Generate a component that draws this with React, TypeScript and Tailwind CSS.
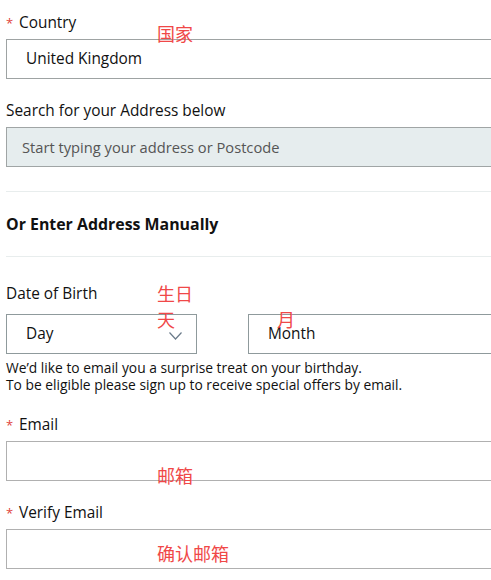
import React from "react";

const Label = ({ text, required }: { text: string; required?: boolean }) => (
  <div className="flex items-center h-[18px] text-[15.4px] leading-[18px] text-[#111]">
    {required && <span className="text-[#e0443c] text-[13px] w-[13px]">*</span>}
    <span>{text}</span>
  </div>
);

const App = () => {
  return (
    <div
      className="relative w-[491px] h-[580px] overflow-hidden bg-white pl-[6px]"
      style={{ fontFamily: "'Open Sans', 'Noto Sans CJK SC', sans-serif" }}
    >
      <div className="w-[520px] pt-[14px]">
        <Label text="Country" required />
        <div className="mt-[7px] h-[40px] border border-[#9ea3a3] flex items-center pl-[19px] text-[15.4px] text-[#111]">
          United Kingdom
        </div>

        <div className="mt-[23px]">
          <Label text="Search for your Address below" />
        </div>
        <div className="mt-[7px] h-[40px] border border-[#a0a5a5] bg-[#e6edee] flex items-center pl-[15px] text-[14.7px] text-[#555]">
          Start typing your address or Postcode
        </div>

        <div className="mt-[24px] h-px bg-[#e8eded]" />
        <div className="mt-[23px] h-[18px] text-[15.9px] leading-[18px] font-bold text-[#111]">
          Or Enter Address Manually
        </div>
        <div className="mt-[23px] h-px bg-[#e8eded]" />

        <div className="mt-[28px]">
          <Label text="Date of Birth" />
        </div>
        <div className="mt-[11px] flex gap-[51px]">
          <div className="w-[191px] h-[40px] border border-[#8f9a9c] flex items-center justify-between pl-[19px] pr-[14px] text-[15.4px] text-[#111]">
            <span>Day</span>
            <svg width="13" height="8" viewBox="0 0 13 8" fill="none" className="mt-[4px]">
              <path d="M0.5 0.5 L6.5 7 L12.5 0.5" stroke="#6b7b8a" strokeWidth="1.2" />
            </svg>
          </div>
          <div className="flex-1 h-[40px] border border-[#8f9a9c] flex items-center pl-[19px] text-[15.4px] text-[#111]">
            Month
          </div>
        </div>
        <div className="mt-[5px] text-[13.8px] leading-[17px] text-[#111] whitespace-nowrap">
          <p>We’d like to email you a surprise treat on your birthday.</p>
          <p>To be eligible please sign up to receive special offers by email.</p>
        </div>

        <div className="mt-[23px]">
          <Label text="Email" required />
        </div>
        <div className="mt-[7px] h-[40px] border border-[#b0b0b0]" />

        <div className="mt-[23px]">
          <Label text="Verify Email" required />
        </div>
        <div className="mt-[7px] h-[40px] border border-[#b0b0b0]" />
      </div>

      <span className="absolute left-[157px] top-[23px] text-[18px] leading-[22px] text-[#f04848]">国家</span>
      <span className="absolute left-[157px] top-[283px] text-[18px] leading-[22px] text-[#f04848]">生日</span>
      <span className="absolute left-[157px] top-[309px] text-[18px] leading-[22px] text-[#f04848]">天</span>
      <span className="absolute left-[277px] top-[309px] text-[18px] leading-[22px] text-[#f04848]">月</span>
      <span className="absolute left-[157px] top-[465px] text-[18px] leading-[22px] text-[#f04848]">邮箱</span>
      <span className="absolute left-[157px] top-[543px] text-[18px] leading-[22px] text-[#f04848]">确认邮箱</span>
    </div>
  );
};

export default App;
